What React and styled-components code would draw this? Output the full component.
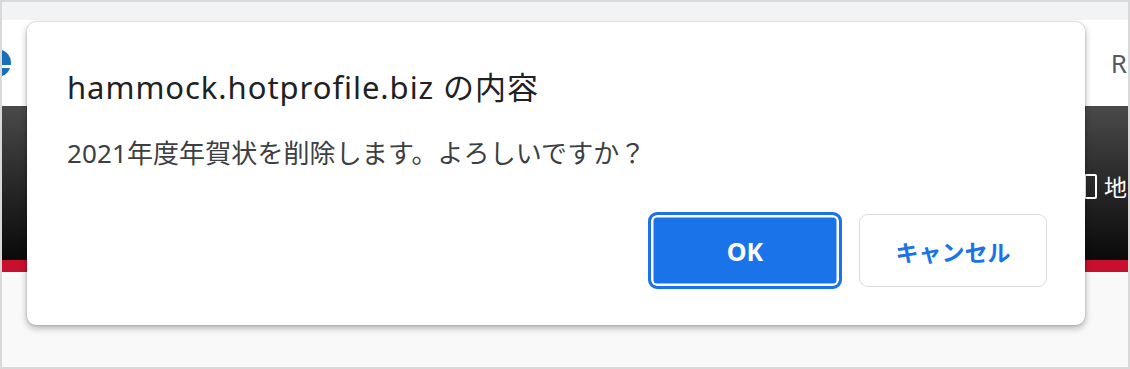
import React from "react";
import styled, { createGlobalStyle } from "styled-components";

const Global = createGlobalStyle`
  html, body { margin: 0; padding: 0; background: #ffffff; }
  body { font-family: "Noto Sans", "Noto Sans CJK JP", sans-serif; }
  * { box-sizing: border-box; }
`;

const Frame = styled.div`
  position: relative;
  width: 1130px;
  height: 369px;
  border: 2px solid #d9d9d9;
  overflow: hidden;
  display: flex;
  flex-direction: column;
  background: #f9f9f9;
`;

const TabStrip = styled.div`
  height: 18px;
  background: #f1f3f4;
  flex: none;
`;

const Header = styled.div`
  height: 86px;
  background: #ffffff;
  display: flex;
  align-items: flex-start;
  justify-content: space-between;
  padding-top: 28px;
  flex: none;
`;

const Logo = styled.svg`
  width: 30px;
  height: 30px;
  margin-left: -20px;
  flex: none;
`;

const HeaderLink = styled.span`
  font-family: "Noto Sans", sans-serif;
  font-size: 26px;
  line-height: 30px;
  color: #555a66;
  margin-right: 1px;
`;

const NavBar = styled.div`
  height: 154px;
  background: linear-gradient(#4a4a4a 0%, #2c2c2c 45%, #0a0a0a 100%);
  display: flex;
  align-items: center;
  justify-content: flex-end;
  padding-top: 6px;
  flex: none;
`;

const NavItem = styled.span`
  display: flex;
  align-items: center;
  gap: 7px;
  color: #ffffff;
  font-family: "Noto Sans CJK JP", sans-serif;
  font-size: 23px;
  line-height: 28px;
  margin-right: 1px;
`;

const NavIcon = styled.span`
  width: 13px;
  height: 25px;
  border: 2.5px solid #ffffff;
  border-radius: 2px;
`;

const RedLine = styled.div`
  height: 12px;
  background: #c8102e;
  flex: none;
`;

const Body = styled.div`
  flex: 1;
  background: #f9f9f9;
`;

const Dialog = styled.div`
  position: absolute;
  left: 25px;
  top: 20px;
  width: 1058px;
  height: 303px;
  background: #ffffff;
  border-radius: 9px;
  box-shadow: 0 3px 7px rgba(0, 0, 0, 0.3), 0 0 2px rgba(0, 0, 0, 0.25);
  padding: 45px 38px 36px 40px;
  display: flex;
  flex-direction: column;
`;

const Title = styled.div`
  font-family: "Noto Sans", "Noto Sans CJK JP", sans-serif;
  font-size: 31px;
  letter-spacing: 0.95px;
  line-height: 40px;
  color: #202124;
`;

const Message = styled.div`
  margin-top: 29px;
  font-family: "Noto Sans", "Noto Sans CJK JP", sans-serif;
  font-size: 26px;
  letter-spacing: 0.1px;
  line-height: 34px;
  color: #3c4043;
`;

const Buttons = styled.div`
  margin-top: auto;
  display: flex;
  justify-content: flex-end;
  align-items: center;
  gap: 17px;
`;

const Button = styled.button`
  font-family: "Noto Sans", "Noto Sans CJK JP", sans-serif;
  font-size: ${(p) => (p.$primary ? "25px" : "23px")};
  font-weight: ${(p) => (p.$primary ? 700 : 600)};
  border-radius: 9px;
  cursor: pointer;
  display: flex;
  align-items: center;
  justify-content: center;
  padding: 0;
  width: ${(p) => (p.$primary ? "194px" : "188px")};
  height: ${(p) => (p.$primary ? "77px" : "73px")};
  color: ${(p) => (p.$primary ? "#ffffff" : "#1a73e8")};
  background: ${(p) => (p.$primary ? "#1a73e8" : "#ffffff")};
  border: ${(p) => (p.$primary ? "3px solid #1a73e8" : "1.5px solid #dadce0")};
  box-shadow: ${(p) => (p.$primary ? "inset 0 0 0 2.5px #ffffff" : "none")};
`;

export default function App() {
  return (
    <>
      <Global />
      <Frame>
        <TabStrip />
        <Header>
          <Logo viewBox="0 0 30 30">
            <circle cx="15" cy="15" r="14" fill="#1b6fb8" />
            <rect x="0" y="17" width="30" height="3" fill="#ffffff" />
            <circle cx="15" cy="10" r="4" fill="#ffffff" opacity="0.5" />
          </Logo>
          <HeaderLink>R</HeaderLink>
        </Header>
        <NavBar>
          <NavItem>
            <NavIcon />
            地
          </NavItem>
        </NavBar>
        <RedLine />
        <Body />
        <Dialog role="alertdialog">
          <Title>hammock.hotprofile.biz の内容</Title>
          <Message>2021年度年賀状を削除します。よろしいですか？</Message>
          <Buttons>
            <Button $primary>OK</Button>
            <Button>キャンセル</Button>
          </Buttons>
        </Dialog>
      </Frame>
    </>
  );
}
